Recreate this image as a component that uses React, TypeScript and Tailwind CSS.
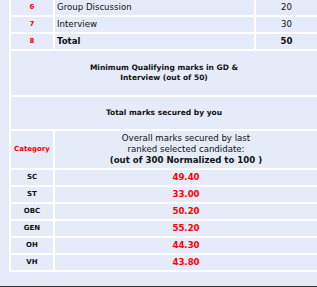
import React from 'react';

interface Row {
    no: string;
    label: string;
    marks: string;
    bold?: boolean;
}

interface Cutoff {
    category: string;
    value: string;
}

const rows: Row[] = [
    { no: '6', label: 'Group Discussion', marks: '20' },
    { no: '7', label: 'Interview', marks: '30' },
    { no: '8', label: 'Total', marks: '50', bold: true },
];

const cutoffs: Cutoff[] = [
    { category: 'SC', value: '49.40' },
    { category: 'ST', value: '33.00' },
    { category: 'OBC', value: '50.20' },
    { category: 'GEN', value: '55.20' },
    { category: 'OH', value: '44.30' },
    { category: 'VH', value: '43.80' },
];

const cell = 'bg-[#e5ebf8] flex items-center';

export default function App() {
    return (
        <div className="w-[317px] h-[287px] overflow-hidden bg-[#e5ebf8] flex flex-col font-['DejaVu_Sans',sans-serif] text-[#111]">
            <div className="ml-[9px] -mt-[2px] w-[310px] bg-white p-[2px] grid grid-cols-[42px_199px_61px] gap-[2px]">
                {rows.map((r) => (
                    <React.Fragment key={r.no}>
                        <div className={`${cell} h-[15px] justify-center text-[7px] font-bold text-[#ff0000]`}>{r.no}</div>
                        <div className={`${cell} h-[15px] pl-[2px] text-[8.6px] ${r.bold ? 'font-bold' : ''}`}>{r.label}</div>
                        <div className={`${cell} h-[15px] justify-center text-[8.6px] ${r.bold ? 'font-bold' : ''}`}>{r.marks}</div>
                    </React.Fragment>
                ))}

                <div className={`${cell} col-span-3 h-[44px] justify-center text-center text-[7.5px] font-bold leading-[10px]`}>
                    Minimum Qualifying marks in GD &amp;
                    <br />
                    Interview (out of 50)
                </div>

                <div className={`${cell} col-span-3 h-[32px] justify-center text-[7.5px] font-bold`}>
                    Total marks secured by you
                </div>

                <div className={`${cell} h-[37px] justify-center text-[7px] font-bold text-[#ff0000]`}>Category</div>
                <div className={`${cell} col-span-2 h-[37px] justify-center text-center text-[8.6px] leading-[11px]`}>
                    <div>
                        Overall marks secured by last
                        <br />
                        ranked selected candidate:
                        <br />
                        <span className="font-bold">(out of 300 Normalized to 100 )</span>
                    </div>
                </div>

                {cutoffs.map((c) => (
                    <React.Fragment key={c.category}>
                        <div className={`${cell} h-[15px] justify-center text-[7px] font-bold`}>{c.category}</div>
                        <div className={`${cell} col-span-2 h-[15px] justify-center text-[8.6px] font-bold text-[#ff0000]`}>{c.value}</div>
                    </React.Fragment>
                ))}
            </div>
            <div className="flex-1" />
            <div className="h-px bg-[#333]" />
        </div>
    );
}
